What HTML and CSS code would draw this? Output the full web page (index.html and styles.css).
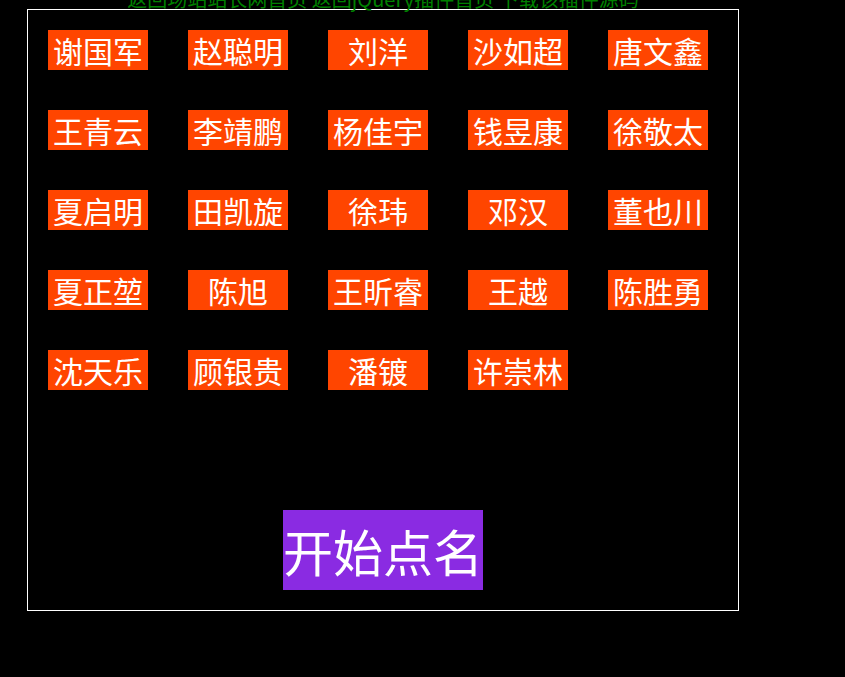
FILE: index.html
```html
<!DOCTYPE html>
<html lang="zh-CN">
<head>
<meta charset="utf-8">
<title>点名</title>
<link rel="stylesheet" href="styles.css">
</head>
<body>
<div class="page">
  <div class="header">返回场站站长网首页 返回jQuery插件首页 下载该插件源码</div>
  <div class="box">
    <div class="names">
      <div class="name">谢国军</div>
      <div class="name">赵聪明</div>
      <div class="name">刘洋</div>
      <div class="name">沙如超</div>
      <div class="name">唐文鑫</div>
      <div class="name">王青云</div>
      <div class="name">李靖鹏</div>
      <div class="name">杨佳宇</div>
      <div class="name">钱昱康</div>
      <div class="name">徐敬太</div>
      <div class="name">夏启明</div>
      <div class="name">田凯旋</div>
      <div class="name">徐玮</div>
      <div class="name">邓汉</div>
      <div class="name">董也川</div>
      <div class="name">夏正堃</div>
      <div class="name">陈旭</div>
      <div class="name">王昕睿</div>
      <div class="name">王越</div>
      <div class="name">陈胜勇</div>
      <div class="name">沈天乐</div>
      <div class="name">顾银贵</div>
      <div class="name">潘镀</div>
      <div class="name">许崇林</div>
    </div>
    <div class="start">开始点名</div>
  </div>
</div>
</body>
</html>
```
FILE: styles.css
```css
html, body {
  margin: 0;
  padding: 0;
  background: #000;
  height: 100%;
  overflow: hidden;
}
body {
  font-family: "Noto Sans CJK SC", "Noto Sans", sans-serif;
}
.page {
  padding-left: 27px;
}
.header {
  width: 712px;
  height: 20px;
  line-height: 20px;
  margin-top: -11px;
  font-size: 20px;
  color: #008000;
  text-align: center;
  white-space: nowrap;
}
.box {
  width: 710px;
  height: 600px;
  border: 1px solid #fff;
  box-sizing: content-box;
  display: flex;
  flex-direction: column;
  padding: 0;
}
.names {
  display: flex;
  flex-wrap: wrap;
  gap: 40px;
  padding: 20px 20px 0 20px;
}
.name {
  width: 100px;
  height: 40px;
  line-height: 40px;
  background: #ff4500;
  color: #fff;
  font-size: 30px;
  text-align: center;
  white-space: nowrap;
}
.start {
  margin-top: auto;
  margin-bottom: 20px;
  align-self: center;
  width: 200px;
  height: 80px;
  line-height: 80px;
  background: #8a2be2;
  color: #fff;
  font-size: 50px;
  text-align: center;
  white-space: nowrap;
}
```
